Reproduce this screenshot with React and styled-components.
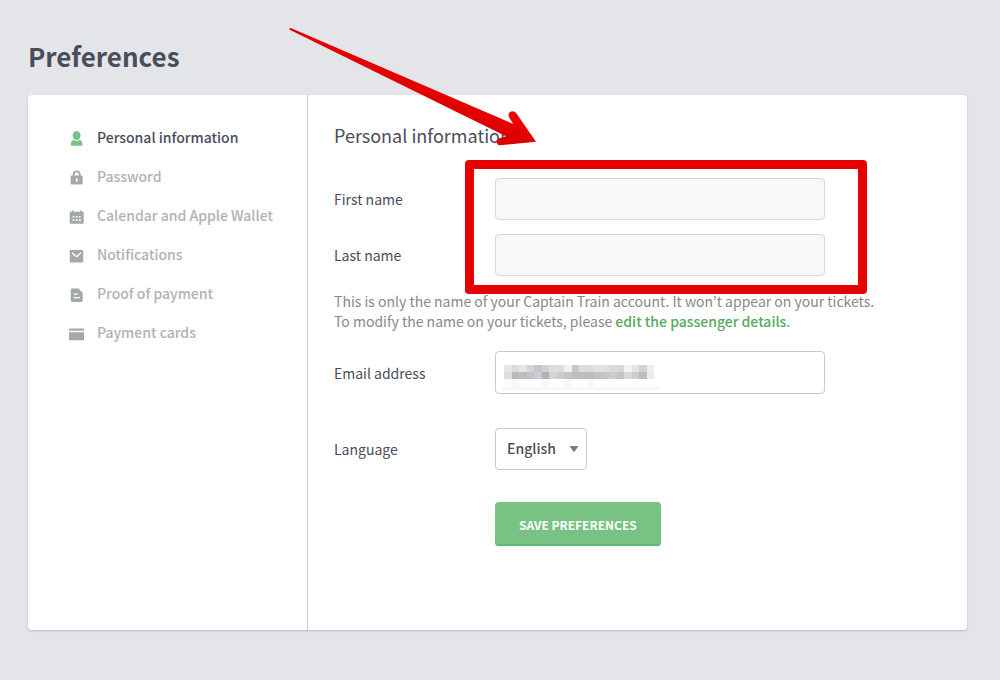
import React from "react";
import styled, { createGlobalStyle } from "styled-components";

const GlobalStyle = createGlobalStyle`
  *, *::before, *::after { box-sizing: border-box; }
  body {
    margin: 0;
    background: #e4e5e9;
    color: #4a4d5b;
    font-family: "Noto Sans CJK KR", "Noto Sans", sans-serif;
    font-size: 14px;
    line-height: 20px;
  }
`;

const Page = styled.main`
  padding: 36px 33px 49px 28px;
`;

const Title = styled.h1`
  margin: 0 0 19px;
  font-size: 26px;
  line-height: 40px;
  font-weight: 700;
`;

const Card = styled.div`
  display: flex;
  position: relative;
  min-height: 535px;
  background: #fff;
  border-radius: 4px;
  box-shadow: 0 1px 2px rgba(60, 64, 80, 0.24);
`;

const Sidebar = styled.nav`
  flex: 0 0 280px;
  padding: 24px 20px 24px 41px;
  border-right: 1px solid #cccdcf;
`;

const NavList = styled.ul`
  margin: 0;
  padding: 0;
  list-style: none;
`;

const NavLink = styled.a`
  display: flex;
  align-items: center;
  gap: 12px;
  height: 39px;
  color: ${(p) => (p.$active ? "#4a4d5b" : "#b0b2b5")};
  font-weight: 500;
  text-decoration: none;
  white-space: nowrap;

  svg {
    flex: none;
    color: ${(p) => (p.$active ? "#78c283" : "#a3a8a9")};
  }
`;

const NavLabel = styled.span`
  padding-bottom: 3px;
`;

const Content = styled.section`
  flex: 1;
  min-width: 0;
  padding: 28px 26px;
`;

const Heading = styled.h2`
  margin: 0 0 31px;
  font-size: 18px;
  line-height: 24px;
  font-weight: 400;
`;

const NameGroup = styled.div`
  display: grid;
  position: relative;
  gap: 14px;
`;

const Highlight = styled.div`
  position: absolute;
  top: -18px;
  left: 131px;
  width: 402px;
  height: 134px;
  border: 9px solid #e60000;
  border-radius: 4px;
  pointer-events: none;
`;

const FieldRow = styled.div`
  display: grid;
  grid-template-columns: 161px minmax(0, 330px);
  align-items: center;
  margin-top: ${(p) => p.$space || 0}px;
`;

const TextInput = styled.input`
  display: block;
  width: 100%;
  height: ${(p) => (p.disabled ? 42 : 43)}px;
  padding: 0 11px;
  border: 1px solid ${(p) => (p.disabled ? "#d9d9dd" : "#c8c8ce")};
  border-radius: 4px;
  background: ${(p) => (p.disabled ? "#f8f8fb" : "#fff")};
  color: inherit;
  font: inherit;
`;

const Note = styled.p`
  margin: 15px 0 0;
  color: #87898a;
`;

const NoteLink = styled.a`
  color: #58a862;
  font-weight: 500;
  text-decoration: none;
`;

const Control = styled.div`
  position: relative;
  justify-self: ${(p) => (p.$fit ? "start" : "stretch")};
`;

const Redaction = styled.svg`
  position: absolute;
  top: 14px;
  left: 7px;
`;

const Select = styled.select`
  display: block;
  appearance: none;
  width: 92px;
  height: 42px;
  padding: 0 30px 2px 11px;
  border: 1px solid #c8c8ce;
  border-radius: 4px;
  background: #fff;
  color: inherit;
  font: inherit;
  font-weight: 500;
`;

const Caret = styled.svg`
  position: absolute;
  top: 18px;
  right: 9px;
  pointer-events: none;
`;

const SaveButton = styled.button`
  display: block;
  height: 44px;
  margin: 32px 0 0 161px;
  padding: 2px 24px 0;
  border: 0;
  border-radius: 4px;
  box-shadow: inset 0 -2px #62b970;
  background: #78c283;
  color: #fff;
  font: inherit;
  font-size: 12px;
  font-weight: 700;
  text-transform: uppercase;
`;

const Arrow = styled.svg`
  position: absolute;
  top: -70px;
  left: 257px;
  pointer-events: none;
`;

const Icon = ({ children }) => (
  <svg width="16" height="16" viewBox="0 0 16 16" fill="currentColor" aria-hidden="true">
    {children}
  </svg>
);

const PersonIcon = () => (
  <Icon>
    <path d="M7.6.2c2.4 0 3.9 1.6 3.9 4.1 0 2.8-1.6 4.8-3.9 4.8S3.700 7.100 3.700 4.300C3.700 1.800 5.200.2 7.600.2z" />
    <path d="M4.400 9c2 1.500 4.400 1.500 6.400 0 1.700.5 2.600 1.900 2.600 4.200 0 1-.5 1.500-1.500 1.500H3.400c-1 0-1.500-.5-1.500-1.500 0-2.300.8-3.700 2.500-4.200z" />
  </Icon>
);

const LockIcon = () => (
  <Icon>
    <path
      fillRule="evenodd"
      d="M3.800 5.500V4.300a3.900 3.900 0 0 1 7.800 0v1.200h.9c.8 0 1.200.4 1.200 1.200v6.600c0 .8-.4 1.200-1.200 1.200H2.900c-.8 0-1.200-.4-1.200-1.200V6.700c0-.8.4-1.200 1.200-1.200zM5.700 5.500h4V4.300a2 2 0 0 0-4 0zM6.900 8.200v3.500h1.600V8.200z"
    />
  </Icon>
);

const CalendarIcon = () => (
  <Icon>
    <path
      fillRule="evenodd"
      d="M2.700 1.600h1.800v1.100h6.400V1.600h1.800v1.100h1c.6 0 1 .4 1 1v10c0 .6-.4 1-1 1h-12c-.6 0-1-.4-1-1v-10c0-.6.4-1 1-1h1zM3.700 7v1.600h1.700V7zM6.900 7v1.600h1.700V7zM10 7v1.600h1.700V7zM3.700 10.300v1.600h1.700v-1.600zM6.900 10.300v1.600h1.700v-1.600zM10 10.300v1.600h1.700v-1.600z"
    />
  </Icon>
);

const MailIcon = () => (
  <Icon>
    <rect x="0.700" y="2" width="13.500" height="12.500" rx="1.200" />
    <path d="M3 4.800l3.600 3.200c.6.500 1.200.5 1.800 0L12 4.800" fill="none" stroke="#fff" strokeWidth="1.400" />
  </Icon>
);

const DocumentIcon = () => (
  <Icon>
    <path d="M3 1.500h6.500l4.200 4.200v8c0 .8-.4 1.200-1.200 1.200H3c-.8 0-1.200-.4-1.200-1.200v-11c0-.8.4-1.200 1.200-1.200z" />
    <path d="M4.700 7.200h4M4.700 10.600h6.200" stroke="#fff" strokeWidth="1.300" />
  </Icon>
);

const CardIcon = () => (
  <Icon>
    <path d="M1 2.500h13c.7 0 1 .3 1 1v1.300H0V3.500c0-.7.300-1 1-1zM0 6.300h15v6.900c0 .7-.3 1-1 1H1c-.7 0-1-.3-1-1z" />
  </Icon>
);

const sections = [
  { label: "Personal information", icon: PersonIcon, active: true },
  { label: "Password", icon: LockIcon },
  { label: "Calendar and Apple Wallet", icon: CalendarIcon },
  { label: "Notifications", icon: MailIcon },
  { label: "Proof of payment", icon: DocumentIcon },
  { label: "Payment cards", icon: CardIcon },
];

const mosaic = [
  "e6e6e7 dadadc e6e6e7 d5d5d8 c7c7cb d1d1d4 dedee0 dedee0 f0f0f1 c6c6ca dcdcde dcdcdf e2e2e4 e0e0e2 dadadd d7d7db f2f2f3 e3e3e5 d2d2d5 eeeef0",
  "dededf b9b9be bdbdc2 c4c4c8 cbcbd0 b1b1b7 d4d4d8 cbcbd0 c3c3c8 bdbdc2 bdbdc2 bdbdc2 c0c0c5 c6c6ca cdcdd1 c4c4c8 d9d9dc cdcdd1 bdbdc2 ebebed",
  "fbfbfb f9f9f9 fff fff fff f9f9f9 fff fff f7f7f8 fff fff f9f9f9",
].map((row) => row.split(" "));

export default function App() {
  return (
    <>
      <GlobalStyle />
      <Page>
        <Title>Preferences</Title>
        <Card>
          <Sidebar aria-label="Preferences">
            <NavList>
              {sections.map(({ label, icon: SectionIcon, active }) => (
                <li key={label}>
                  <NavLink href="#" $active={active} aria-current={active ? "page" : undefined}>
                    <SectionIcon />
                    <NavLabel>{label}</NavLabel>
                  </NavLink>
                </li>
              ))}
            </NavList>
          </Sidebar>
          <Content>
            <Heading>Personal information</Heading>
            <NameGroup>
              <FieldRow>
                <label htmlFor="first-name">First name</label>
                <TextInput id="first-name" disabled />
              </FieldRow>
              <FieldRow>
                <label htmlFor="last-name">Last name</label>
                <TextInput id="last-name" disabled />
              </FieldRow>
              <Highlight />
            </NameGroup>
            <Note>
              This is only the name of your Captain Train account. It won’t appear on your tickets.
              <br />
              To modify the name on your tickets, please <NoteLink href="#">edit the passenger details</NoteLink>.
            </Note>
            <FieldRow $space={20}>
              <label htmlFor="email">Email address</label>
              <Control>
                <TextInput id="email" type="email" />
                <Redaction width="160" height="26" viewBox="0 0 160 26" shapeRendering="crispEdges" aria-hidden="true">
                  {mosaic.map((row, y) =>
                    row.map((color, x) => (
                      <rect key={`${x}-${y}`} x={2 + x * 7.5} y={y * 7.2} width="7.5" height="7.2" fill={`#${color}`} />
                    ))
                  )}
                  <rect x="0" y="22" width="159" height="3" fill="#f7f7f7" />
                </Redaction>
              </Control>
            </FieldRow>
            <FieldRow $space={34}>
              <label htmlFor="language">Language</label>
              <Control $fit>
                <Select id="language" defaultValue="English">
                  <option>English</option>
                </Select>
                <Caret width="8" height="6" viewBox="0 0 8 6" aria-hidden="true">
                  <path d="M.5 0h7c.5 0 .6.400.4.800L4.800 5.200c-.5.600-1.100.600-1.600 0L.1.800C-.1.400 0 0 .5 0z" fill="#777980" />
                </Caret>
              </Control>
            </FieldRow>
            <SaveButton type="button">Save preferences</SaveButton>
          </Content>
          <Arrow width="256" height="128" viewBox="285 25 256 128" aria-hidden="true">
            <defs>
              <linearGradient id="arrow-shade" gradientUnits="userSpaceOnUse" x1="476" y1="98" x2="466" y2="120">
                <stop offset="0" stopColor="#f20000" />
                <stop offset="1" stopColor="#d80000" />
              </linearGradient>
            </defs>
            <path
              d="M290.800 28L513.300 124 509.200 117.500C506.500 112.500 513 108.500 516.500 113.500L536 141.700 500 145.300C496 145.300 495.500 139.500 499.500 138.300L506 136.300 290.200 30C289 29.200 289.600 27.600 290.800 28z"
              fill="url(#arrow-shade)"
            />
          </Arrow>
        </Card>
      </Page>
    </>
  );
}
